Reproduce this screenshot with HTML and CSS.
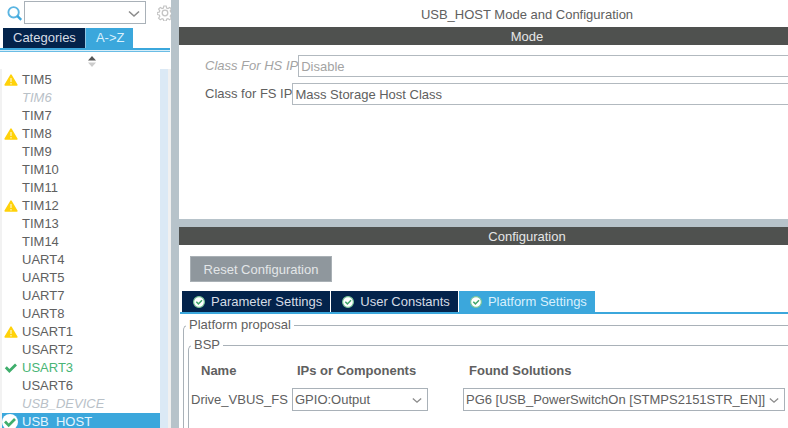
FILE: index.html
```html
<!DOCTYPE html>
<html lang="en">
<head>
<meta charset="utf-8">
<title>USB_HOST Mode and Configuration</title>
<link rel="stylesheet" href="styles.css">
</head>
<body>
<svg class="defs" aria-hidden="true">
  <symbol id="chevron" viewBox="0 0 12 8"><path d="M1 1.5 6 6 11 1.5" fill="none" stroke="#8c8c8c" stroke-width="1.6"/></symbol>
  <symbol id="warn" viewBox="0 0 14 12"><path d="M7 1.2 12.8 11H1.2Z" fill="#ffd20a" stroke="#ffd20a" stroke-width="1.6" stroke-linejoin="round"/><path d="M7 4v4M7 9v1.4" stroke="#fff3b8" stroke-width="1.3"/></symbol>
  <symbol id="tick" viewBox="0 0 14 12"><path d="M1.8 5.2 5.4 9 12 2.6" fill="none" stroke="#3fae6c" stroke-width="2.8"/></symbol>
  <symbol id="badge" viewBox="0 0 16 16"><circle cx="8" cy="8" r="8" fill="#fff"/><path d="M3 7.5 6.7 11.4 13 5" fill="none" stroke="#3fae6c" stroke-width="2.7"/></symbol>
  <symbol id="ok" viewBox="0 0 12 12"><circle cx="6" cy="6" r="5.4" fill="#fff" stroke="#7cc79a" stroke-width="1.2"/><path d="M3.3 5.8 5.4 7.9 9 4.2" fill="none" stroke="#3fa568" stroke-width="1.5"/></symbol>
</svg>
<div class="app">
  <aside class="sidebar">
    <div class="search">
      <svg class="lens" viewBox="0 0 16 16"><circle cx="6.6" cy="6.3" r="5.2" fill="none" stroke="#5bb5e2" stroke-width="1.9"/><path d="M10.2 9.8 14.2 13.8" stroke="#3ba7dc" stroke-width="2.4"/></svg>
      <div class="combo search-box"><input type="text" aria-label="Search"><svg class="arrow"><use href="#chevron"/></svg></div>
      <svg class="gear" viewBox="0 0 16 16"><circle cx="8" cy="8" r="2.8" fill="none" stroke="#c4c4c4" stroke-width="1.3"/><path d="M6.8 1h2.4l.4 2 1.3.6 1.8-1.2 1.7 1.7-1.2 1.8.6 1.2 2 .4v2l-2 .5-.6 1.3 1.2 1.8-1.7 1.7-1.8-1.2-1.3.6-.4 2H6.8l-.4-2-1.3-.6-1.8 1.2-1.7-1.7 1.2-1.8-.6-1.3-2-.5v-2l2-.4.6-1.2-1.2-1.8 1.7-1.7 1.8 1.2 1.3-.6Z" fill="none" stroke="#c4c4c4" stroke-width="1.2"/></svg>
    </div>
    <nav class="tabs side-tabs">
      <button class="tab">Categories</button>
      <button class="tab active">A-&gt;Z</button>
    </nav>
    <button class="sort" aria-label="Sort"><svg viewBox="0 0 8 11"><path d="M4 0 8 4.5H0Z" fill="#555"/><path d="M0 6.5h8L4 11Z" fill="#ccc"/></svg></button>
    <div class="list-area">
      <ul class="list">
        <li><svg><use href="#warn"/></svg><span>TIM5</span></li>
        <li class="off"><span>TIM6</span></li>
        <li><span>TIM7</span></li>
        <li><svg><use href="#warn"/></svg><span>TIM8</span></li>
        <li><span>TIM9</span></li>
        <li><span>TIM10</span></li>
        <li><span>TIM11</span></li>
        <li><svg><use href="#warn"/></svg><span>TIM12</span></li>
        <li><span>TIM13</span></li>
        <li><span>TIM14</span></li>
        <li><span>UART4</span></li>
        <li><span>UART5</span></li>
        <li><span>UART7</span></li>
        <li><span>UART8</span></li>
        <li><svg><use href="#warn"/></svg><span>USART1</span></li>
        <li><span>USART2</span></li>
        <li class="used"><svg><use href="#tick"/></svg><span>USART3</span></li>
        <li><span>USART6</span></li>
        <li class="off"><span>USB_DEVICE</span></li>
        <li class="selected"><svg><use href="#badge"/></svg><span>USB_HOST</span></li>
      </ul>
      <div class="scroll"></div>
    </div>
  </aside>
  <main class="main">
    <section class="mode">
      <h1 class="title">USB_HOST Mode and Configuration</h1>
      <h2 class="bar">Mode</h2>
      <div class="fields">
        <div class="field off"><label for="hs">Class For HS IP</label><select id="hs" disabled><option>Disable</option></select></div>
        <div class="field"><label for="fs">Class for FS IP</label><select id="fs"><option>Mass Storage Host Class</option></select></div>
      </div>
    </section>
    <section class="config">
      <h2 class="bar">Configuration</h2>
      <button class="reset">Reset Configuration</button>
      <nav class="tabs config-tabs">
        <button class="tab"><svg><use href="#ok"/></svg>Parameter Settings</button>
        <button class="tab"><svg><use href="#ok"/></svg>User Constants</button>
        <button class="tab active"><svg><use href="#ok"/></svg>Platform Settings</button>
      </nav>
      <fieldset class="group">
        <legend>Platform proposal</legend>
        <fieldset class="group inner">
          <legend>BSP</legend>
          <table>
            <thead><tr><th class="c-name">Name</th><th class="c-ip">IPs or Components</th><th class="c-found">Found Solutions</th></tr></thead>
            <tbody><tr>
              <td>Drive_VBUS_FS</td>
              <td><div class="combo ip"><select aria-label="IPs or Components"><option>GPIO:Output</option></select><svg class="arrow"><use href="#chevron"/></svg></div></td>
              <td><div class="combo found"><select aria-label="Found Solutions"><option>PG6 [USB_PowerSwitchOn [STMPS2151STR_EN]]</option></select><svg class="arrow"><use href="#chevron"/></svg></div></td>
            </tr></tbody>
          </table>
        </fieldset>
      </fieldset>
    </section>
  </main>
</div>
</body>
</html>
```
FILE: styles.css
```css
* { box-sizing: border-box; }
body {
  margin: 0;
  font: 13px/18px "Liberation Sans", Arial, sans-serif;
  color: #606060;
  background: #fff;
}
button, input, select { font: inherit; color: inherit; margin: 0; border: 0; border-radius: 0; padding: 0; background: none; }
select { appearance: none; opacity: 1; }
h1, h2, ul { margin: 0; padding: 0; font-size: inherit; font-weight: normal; }
.defs { display: none; }

.app { display: flex; height: 100vh; overflow: hidden; }

/* Sidebar */
.sidebar {
  flex: none;
  display: flex;
  flex-direction: column;
  width: 179px;
  border-right: 8px solid #b7c3ca;
  overflow: hidden;
}
.search { display: flex; flex: none; align-items: flex-start; height: 28px; padding: 1px 0 0 7px; }
.lens { flex: none; width: 16px; height: 16px; margin: 5px 1px 0 0; }
.gear { flex: none; width: 16px; height: 16px; margin: 4px 0 0 11px; }
.combo { position: relative; height: 23px; border: 1px solid #a9b1b8; background: #fff; }
.combo input, .combo select { display: block; width: 100%; height: 21px; padding-left: 2px; }
.combo .arrow { position: absolute; right: 5px; top: 8px; width: 10px; height: 7px; pointer-events: none; }
.search-box { flex: none; width: 122px; }
.search-box .arrow { width: 12px; height: 8px; }

.tabs { display: flex; flex: none; }
.tab { display: flex; align-items: center; background: #03234b; color: #d5dce5; white-space: nowrap; }
.tab.active { background: #3ba7dc; color: #d9f0fc; }
.side-tabs {
  margin: 0 1px 2px 0;
  padding-left: 3px;
  border-bottom: 2px solid #3ba7dc;
  box-shadow: 0 1px #d8eef9, 0 2px #6bbde5;
}
.side-tabs .tab { height: 20px; padding: 0 9px 0 10px; }
.side-tabs .tab.active { border-left: 1px solid #8fc6e4; }
.sort { flex: none; height: 17px; padding: 2px 0 0 12px; }
.sort svg { display: block; width: 8px; height: 11px; margin: 0 auto; }
.list-area { display: flex; flex: 1; min-height: 0; border-left: 2px solid #f2f2f2; }
.list { flex: 1; list-style: none; padding-top: 2px; }
.list li { display: flex; align-items: center; height: 18px; padding-left: 20px; }
.list svg { flex: none; width: 14px; height: 12px; margin: 0 4px 0 -18px; }
.list .off { color: #b9c1c8; font-style: italic; }
.list .used { color: #49b576; }
.list .selected { color: #e4f5fe; background: #3ba7dc; }
.list .selected svg { width: 16px; height: 16px; margin: 0 4px 0 -20px; }
.scroll { flex: none; width: 11px; background: #dbe9f5; border-right: 3px solid #f0f0f0; }

/* Main panels */
.main { flex: 1; min-width: 0; }
.title, .bar { padding-left: 87px; text-align: center; }
.title { height: 27px; padding-top: 6px; }
.bar { height: 18px; line-height: 20px; background: #4f514f; color: #e6e6e6; }
.mode { height: 227px; border-bottom: 8px solid #b7c3ca; }
.fields { display: flex; flex-direction: column; gap: 6px; padding: 10px 0 0 26px; }
.field { display: flex; align-items: center; line-height: 22px; }
.field select { flex: 1; height: 22px; padding-left: 2px; border: 1px solid #b2b9bf; border-right: 0; }
.field.off { color: #a3a3a3; }
.field.off label { font-style: italic; }

.reset { display: block; width: 142px; height: 26px; margin: 11px 0 9px 11px; padding-top: 2px; border: 1px solid #a9b0b5; background: #8f979d; color: #e3e6e8; }
.config-tabs { gap: 1px; padding-left: 2px; margin-left: 1px; border-bottom: 2px solid #3ba7dc; }
.config-tabs .tab { height: 21px; padding: 0 8px 0 11px; }
.config-tabs svg { width: 12px; height: 12px; margin-right: 6px; }

.group { min-width: 0; margin: 2px 0 0 4px; padding: 0; border: 1px solid #a9b1b8; border-width: 1px 0 0 1px; border-top-left-radius: 5px; }
.group legend { margin-left: 2px; padding: 0 3px; }
.group.inner { height: 100px; }
table { border-collapse: collapse; table-layout: fixed; width: 600px; margin-left: 2px; }
th, td { padding: 0; text-align: left; white-space: nowrap; }
th { height: 34px; font-weight: bold; }
.c-name { width: 101px; padding-left: 10px; }
.c-ip { width: 171px; padding-left: 5px; }
.c-found { padding-left: 6px; }
.ip { width: 136px; }
.found { width: 322px; }
```
